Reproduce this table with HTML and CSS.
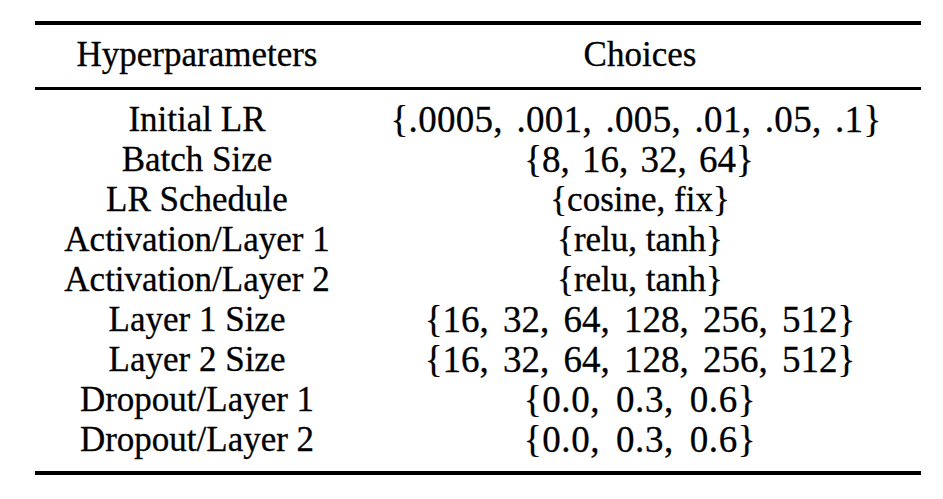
FILE: index.html
```html
<!DOCTYPE html>
<html lang="en">
<head>
<meta charset="utf-8">
<title>Hyperparameters</title>
<link rel="stylesheet" href="styles.css">
</head>
<body>
<div class="booktabs">
  <div class="head row">
    <div class="name">Hyperparameters</div>
    <div class="choice">Choices</div>
  </div>
  <div class="body">
    <div class="row"><div class="name">Initial LR</div><div class="choice set set-lr">{.0005, .001, .005, .01, .05, .1}</div></div>
    <div class="row"><div class="name">Batch Size</div><div class="choice set set-bs">{8, 16, 32, 64}</div></div>
    <div class="row"><div class="name">LR Schedule</div><div class="choice">{cosine, fix}</div></div>
    <div class="row"><div class="name">Activation/Layer 1</div><div class="choice">{relu, tanh}</div></div>
    <div class="row"><div class="name">Activation/Layer 2</div><div class="choice">{relu, tanh}</div></div>
    <div class="row"><div class="name">Layer 1 Size</div><div class="choice set set-size">{16, 32, 64, 128, 256, 512}</div></div>
    <div class="row"><div class="name">Layer 2 Size</div><div class="choice set set-size">{16, 32, 64, 128, 256, 512}</div></div>
    <div class="row"><div class="name">Dropout/Layer 1</div><div class="choice set set-drop">{0.0, 0.3, 0.6}</div></div>
    <div class="row"><div class="name">Dropout/Layer 2</div><div class="choice set set-drop">{0.0, 0.3, 0.6}</div></div>
  </div>
</div>
</body>
</html>
```
FILE: styles.css
```css
html, body {
  margin: 0;
  padding: 0;
  background: #ffffff;
}

body {
  font-family: "Liberation Serif", "Times New Roman", serif;
  font-size: 35px;
  color: #000000;
  padding-top: 21px;
  -webkit-text-stroke: 0.3px #000;
}

.booktabs {
  margin-left: 35px;
  width: 886px;
  border-top: 4px solid #000;
  border-bottom: 4px solid #000;
}

.head {
  padding: 10px 0 12px;
  border-bottom: 3px solid #000;
}

.body {
  padding: 10px 0 11px;
}

.row {
  display: grid;
  grid-template-columns: 324px 1fr;
  line-height: 40px;
  text-align: center;
  white-space: nowrap;
}

.set {
  font-size: 37px;
}

.set-lr { word-spacing: 4px; letter-spacing: 0.3px; margin-right: 8px; }
.set-bs { word-spacing: 3px; margin-right: 2px; }
.set-size { word-spacing: 5px; }
.set-drop { word-spacing: 6px; letter-spacing: 0.6px; }
```
